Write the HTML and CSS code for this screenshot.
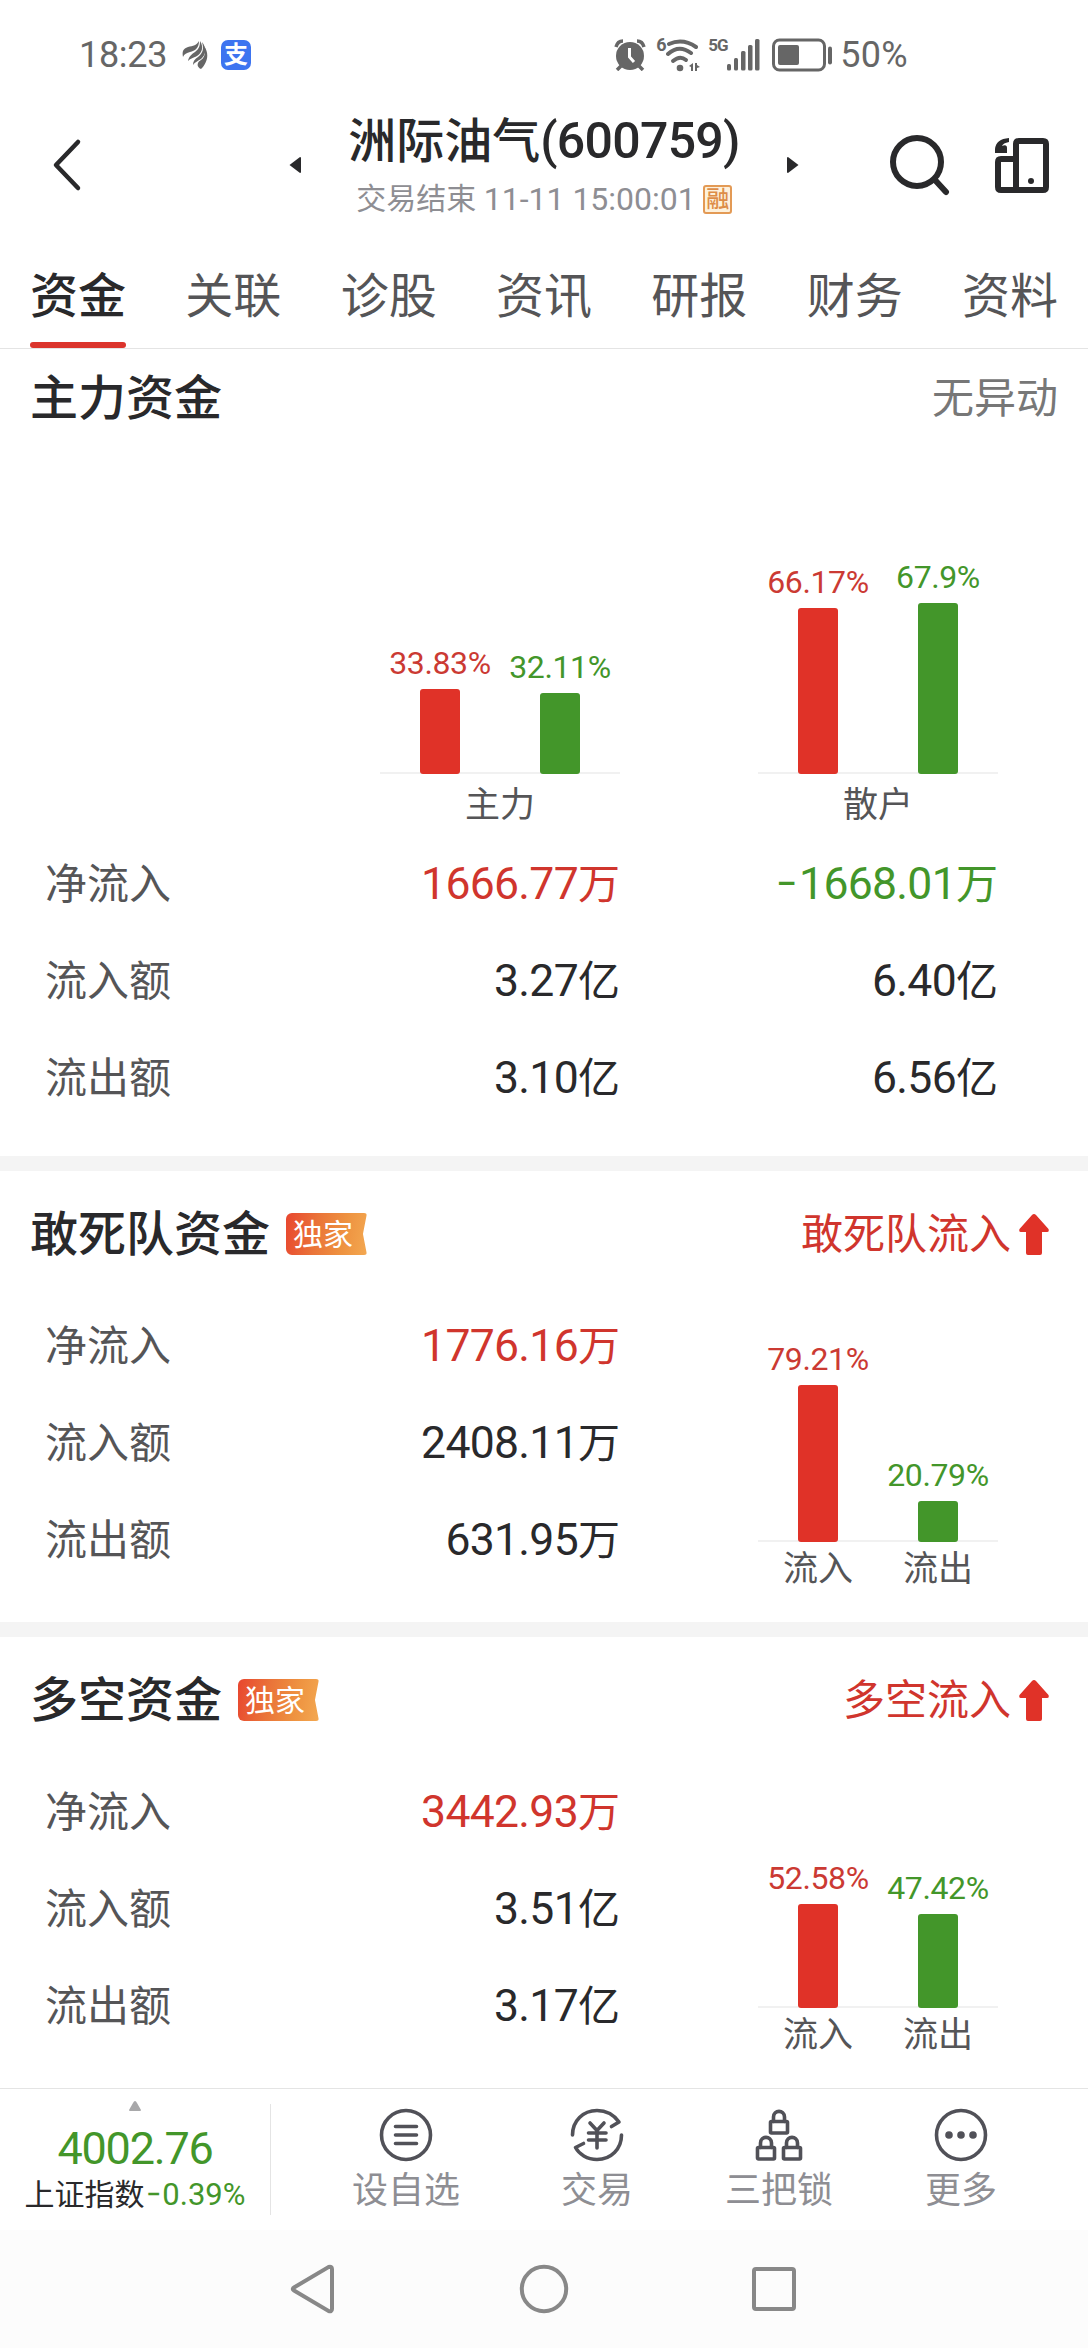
FILE: index.html
```html
<!DOCTYPE html>
<html lang="zh-CN">
<head>
    <meta charset="UTF-8">
    <meta name="viewport" content="width=device-width, initial-scale=1.0">
    <title>洲际油气(600759)</title>
    <link rel="stylesheet" href="styles.css">
</head>
<body>
    <div class="status-bar">
        <span class="clock">18:23</span>
        <svg class="icon-wing" width="26" height="30" viewBox="0 0 26 30">
            <path d="M1 17C0 11 1 9 6 7C11 6 15 5 17 1C17 8 13 11 8 12C5 13 2 14 1 17Z"/>
            <path d="M6 21C7 16 10 14 13 12C17 9 18 6 18 1C22 7 20 13 15 16C11 18 9 18 6 21Z"/>
            <path d="M11 25C11 21 13 19 16 17C21 13 22 9 20 2C25 8 24 15 19 19C16 21 13 22 11 25Z"/>
            <path d="M19 29C14 27 15 22 19 20C23 17 24 12 22 6C28 14 25 23 19 29Z"/>
        </svg>
        <span class="pay-icon">支</span>
        <div class="status-right">
            <svg class="icon-alarm" width="32" height="32" viewBox="0 0 32 32">
                <circle cx="16" cy="17" r="14"/>
                <path class="line" d="M2 8C3 4 5 2 9 2M30 8C29 4 27 2 23 2M7 27L3 31M25 27L29 31"/>
                <path class="hand" d="M15.500 9V18L20 23"/>
            </svg>
            <span class="tiny tiny-wifi">6</span>
            <svg class="icon-wifi" width="34" height="33" viewBox="0 0 34 33">
                <path class="arc" d="M3 5Q17 -1 30 8"/>
                <path class="arc" d="M2 15Q13 5 25 14"/>
                <path class="arc" d="M7 22Q14 16 20 21"/>
                <circle cx="14" cy="29" r="3.300"/>
                <path d="M23 27L27 24V32H25V28ZM29 24H31V26L34 28L31 29V32H29Z"/>
            </svg>
            <span class="tiny tiny-5g">5G</span>
            <svg class="icon-signal" width="34" height="32" viewBox="0 0 34 32">
                <rect x="0" y="25" width="4" height="6.500" rx="1.500"/>
                <rect x="7" y="19" width="4" height="12.500" rx="1.500"/>
                <rect x="14" y="12" width="4.500" height="19.500" rx="1.500"/>
                <rect x="21" y="6" width="4.500" height="25.500" rx="1.500"/>
                <rect x="28" y="0" width="4.500" height="31.500" rx="1.500"/>
            </svg>
            <svg class="icon-battery" width="62" height="34" viewBox="0 0 62 34">
                <rect class="shell" x="1.500" y="2" width="51" height="30" rx="6"/>
                <rect x="6" y="7" width="21" height="20" rx="2"/>
                <rect x="56" y="8.500" width="4" height="18" rx="2"/>
            </svg>
            <span class="battery-text">50%</span>
        </div>
    </div>

    <header class="header">
        <svg class="btn-back" width="30" height="54" viewBox="0 0 30 54">
            <path d="M26 4L4 27L26 50"/>
        </svg>
        <svg class="btn-prev" width="12" height="16" viewBox="0 0 12 16">
            <path d="M0.500 8L11 0Q12 0 12 1V15Q12 16 11 16Z"/>
        </svg>
        <div class="stock">
            <h1 class="stock-name">洲际油气<span class="stock-code">(600759)</span></h1>
            <div class="stock-sub">交易结束 <span class="stock-time">11-11 15:00:01</span><span class="tag-rong">融</span></div>
        </div>
        <svg class="btn-next" width="12" height="16" viewBox="0 0 12 16">
            <path d="M11.500 8L1 0Q0 0 0 1V15Q0 16 1 16Z"/>
        </svg>
        <svg class="btn-search" width="62" height="62" viewBox="0 0 62 62">
            <circle cx="28" cy="28" r="24"/>
            <path d="M46 46L57 58"/>
        </svg>
        <svg class="btn-theme" width="54" height="56" viewBox="0 0 54 56">
            <path class="outline" d="M21 52V7Q21 4 24 4H48Q51 4 51 7V50Q51 53 48 53H6Q3 53 3 50V25Q3 22 6 22H21"/>
            <path d="M0 16V12Q1 2 14 1V5Q8 6 7 9Q12 7 12 11V16Z"/>
            <circle cx="36" cy="44" r="3"/>
        </svg>
    </header>

    <nav class="tabs">
        <a class="tab active">资金</a>
        <a class="tab">关联</a>
        <a class="tab">诊股</a>
        <a class="tab">资讯</a>
        <a class="tab">研报</a>
        <a class="tab">财务</a>
        <a class="tab">资料</a>
    </nav>

    <section class="section section-main">
        <div class="section-head">
            <h2>主力资金</h2>
            <span class="muted">无异动</span>
        </div>
        <div class="chart-row">
            <div class="chart">
                <div class="bars">
                    <div class="bar-col red"><span>33.83%</span><i style="height: 85px"></i></div>
                    <div class="bar-col green"><span>32.11%</span><i style="height: 81px"></i></div>
                </div>
                <div class="chart-labels"><span>主力</span></div>
            </div>
            <div class="chart">
                <div class="bars">
                    <div class="bar-col red"><span>66.17%</span><i style="height: 166px"></i></div>
                    <div class="bar-col green"><span>67.9%</span><i style="height: 171px"></i></div>
                </div>
                <div class="chart-labels"><span>散户</span></div>
            </div>
        </div>
        <div class="row">
            <span class="name">净流入</span>
            <span class="value up">1666.77<small>万</small></span>
            <span class="value down"><b class="minus">−</b>1668.01<small>万</small></span>
        </div>
        <div class="row">
            <span class="name">流入额</span>
            <span class="value">3.27<small>亿</small></span>
            <span class="value">6.40<small>亿</small></span>
        </div>
        <div class="row">
            <span class="name">流出额</span>
            <span class="value">3.10<small>亿</small></span>
            <span class="value">6.56<small>亿</small></span>
        </div>
    </section>

    <section class="section section-side">
        <div class="section-head">
            <h2>敢死队资金</h2>
            <span class="badge">独家</span>
            <span class="trend">敢死队流入
                <svg width="30" height="41" viewBox="0 0 30 41"><path d="M15 0Q16 0 17 1L29.500 15Q30.500 18 28 18H23V39Q23 41 21 41H9Q7 41 7 39V18H2Q-0.500 18 0.500 15L13 1Q14 0 15 0Z"/></svg>
            </span>
        </div>
        <div class="section-body">
            <div class="rows">
                <div class="row"><span class="name">净流入</span><span class="value up">1776.16<small>万</small></span></div>
                <div class="row"><span class="name">流入额</span><span class="value">2408.11<small>万</small></span></div>
                <div class="row"><span class="name">流出额</span><span class="value">631.95<small>万</small></span></div>
            </div>
            <div class="chart">
                <div class="bars">
                    <div class="bar-col red"><span>79.21%</span><i style="height: 157px"></i></div>
                    <div class="bar-col green"><span>20.79%</span><i style="height: 41px"></i></div>
                </div>
                <div class="chart-labels"><span>流入</span><span>流出</span></div>
            </div>
        </div>
    </section>

    <section class="section section-side">
        <div class="section-head">
            <h2>多空资金</h2>
            <span class="badge">独家</span>
            <span class="trend">多空流入
                <svg width="30" height="41" viewBox="0 0 30 41"><path d="M15 0Q16 0 17 1L29.500 15Q30.500 18 28 18H23V39Q23 41 21 41H9Q7 41 7 39V18H2Q-0.500 18 0.500 15L13 1Q14 0 15 0Z"/></svg>
            </span>
        </div>
        <div class="section-body">
            <div class="rows">
                <div class="row"><span class="name">净流入</span><span class="value up">3442.93<small>万</small></span></div>
                <div class="row"><span class="name">流入额</span><span class="value">3.51<small>亿</small></span></div>
                <div class="row"><span class="name">流出额</span><span class="value">3.17<small>亿</small></span></div>
            </div>
            <div class="chart">
                <div class="bars">
                    <div class="bar-col red"><span>52.58%</span><i style="height: 104px"></i></div>
                    <div class="bar-col green"><span>47.42%</span><i style="height: 94px"></i></div>
                </div>
                <div class="chart-labels"><span>流入</span><span>流出</span></div>
            </div>
        </div>
    </section>

    <footer class="toolbar">
        <div class="index">
            <svg class="index-arrow" width="12" height="10" viewBox="0 0 12 10"><path d="M6 0Q7 0 8 2L12 9Q12 10 11 10H1Q0 10 0 9L4 2Q5 0 6 0Z"/></svg>
            <div class="index-value">4002.76</div>
            <div class="index-name">上证指数<span class="index-change"><b class="minus">−</b>0.39%</span></div>
        </div>
        <div class="actions">
            <a class="action">
                <svg width="54" height="54" viewBox="0 0 54 54">
                    <circle cx="27" cy="27" r="24.500"/>
                    <path class="thick" d="M16.500 18.500H37.500M16.500 27H37.500M16.500 35.500H37.500"/>
                </svg>
                <span>设自选</span>
            </a>
            <a class="action">
                <svg width="54" height="54" viewBox="0 0 54 54">
                    <path d="M2.500 27C2.500 13 13 2.500 27 2.500C37 2.500 44 7 49 14L41.500 18.500"/>
                    <path d="M51.500 27C51.500 41 41 51.500 27 51.500C17 51.500 9 46 5.500 39.500L13.500 35.500"/>
                    <path d="M20 15L27 22.500L34 15M27 23V40M18.500 25H36M18.500 32H36"/>
                </svg>
                <span>交易</span>
            </a>
            <a class="action">
                <svg width="54" height="54" viewBox="0 0 54 54">
                    <rect x="18.500" y="13.500" width="17" height="11.500" rx="1"/>
                    <path d="M21.500 13.500V9C21.500 1.500 32.500 1.500 32.500 9V13.500"/>
                    <rect x="5.500" y="39.500" width="17" height="11.500" rx="1"/>
                    <path d="M8.500 39.500V35C8.500 27.500 19.500 27.500 19.500 35V39.500"/>
                    <rect x="31.500" y="39.500" width="17" height="11.500" rx="1"/>
                    <path d="M34.500 39.500V35C34.500 27.500 45.500 27.500 45.500 35V39.500"/>
                </svg>
                <span>三把锁</span>
            </a>
            <a class="action">
                <svg width="54" height="54" viewBox="0 0 54 54">
                    <circle cx="27" cy="27" r="24.500"/>
                    <circle class="dot" cx="15" cy="27" r="3.800"/>
                    <circle class="dot" cx="27" cy="27" r="3.800"/>
                    <circle class="dot" cx="39" cy="27" r="3.800"/>
                </svg>
                <span>更多</span>
            </a>
        </div>
    </footer>

    <div class="system-nav">
        <svg width="50" height="50" viewBox="0 0 50 50"><path d="M5 23.500L39.500 3Q43 2 43 5V45Q43 48 39.500 47L5 26.500Q2.500 25 5 23.500Z"/></svg>
        <svg width="50" height="50" viewBox="0 0 50 50"><circle cx="25" cy="25" r="22.200"/></svg>
        <svg width="50" height="50" viewBox="0 0 50 50"><rect x="5" y="5" width="40" height="40" rx="2"/></svg>
    </div>
</body>
</html>
```
FILE: styles.css
```css
* {
    box-sizing: border-box;
}

body {
    margin: 0;
    width: 1088px;
    background-color: #fff;
    color: #29292b;
    font-family: Roboto, "Noto Sans CJK SC", sans-serif;
}

h1, h2 {
    margin: 0;
    font-weight: 500;
}

svg {
    display: block;
    flex-shrink: 0;
}

/* status bar */
.status-bar {
    display: flex;
    align-items: center;
    height: 110px;
    padding: 0 180px 0 79px;
    color: #666;
    fill: #666;
    font-size: 36px;
    line-height: 40px;
}

.clock {
    width: 103px;
    letter-spacing: -0.3px;
}

.pay-icon {
    width: 30px;
    height: 30px;
    margin-left: 13px;
    border-radius: 7px;
    background-color: #3d74f0;
    color: #fff;
    font-size: 24px;
    font-weight: 700;
    line-height: 30px;
    text-align: center;
}

.status-right {
    display: flex;
    align-items: center;
    margin-left: auto;
}

.icon-alarm .line {
    fill: none;
    stroke: #666;
    stroke-width: 3.5;
}

.icon-alarm .hand {
    fill: none;
    stroke: #fff;
    stroke-width: 3;
}

.tiny {
    align-self: flex-start;
    font-size: 18px;
    font-weight: 700;
    line-height: 20px;
}

.tiny-wifi {
    width: 10px;
    margin-left: 10px;
}

.icon-wifi .arc {
    fill: none;
    stroke: #666;
    stroke-width: 4;
    stroke-linecap: round;
}

.tiny-5g {
    width: 19px;
    margin-left: 8px;
    font-size: 17px;
    letter-spacing: -1px;
}

.icon-battery {
    margin-left: 11px;
}

.icon-battery .shell {
    fill: none;
    stroke: #666;
    stroke-width: 3;
}

.battery-text {
    margin-left: 6px;
    letter-spacing: 0.3px;
}

/* header */
.header {
    display: flex;
    align-items: center;
    height: 110px;
    padding-left: 52px;
    fill: #29292b;
}

.btn-back {
    fill: none;
    stroke: #29292b;
    stroke-width: 4.5;
    stroke-linecap: round;
    stroke-linejoin: round;
}

.btn-prev {
    margin-left: 207px;
}

.stock {
    width: 486px;
    margin-top: 7px;
    text-align: center;
}

.stock-name {
    font-size: 48px;
    line-height: 60px;
    white-space: nowrap;
}

.stock-code {
    font-size: 50px;
    letter-spacing: -0.7px;
}

.stock-sub {
    display: flex;
    align-items: center;
    justify-content: center;
    color: #8e8e93;
    font-size: 30px;
    line-height: 54px;
    white-space: pre;
}

.stock-time {
    font-size: 32px;
}

.tag-rong {
    width: 29px;
    height: 29px;
    margin-left: 7px;
    border: 2px solid #e39a55;
    border-radius: 3px;
    background-color: #fdf1dc;
    color: #dd8d48;
    font-size: 23px;
    font-weight: 500;
    line-height: 26px;
    text-indent: 1px;
}

.btn-search {
    margin-left: 90px;
    fill: none;
    stroke: #29292b;
    stroke-width: 6;
    stroke-linecap: round;
}

.btn-theme {
    margin-left: 44px;
}

.btn-theme .outline {
    fill: none;
    stroke: #29292b;
    stroke-width: 6;
}

/* tabs */
.tabs {
    display: flex;
    justify-content: space-between;
    height: 129px;
    padding: 0 30px;
    border-bottom: 1px solid #e4e4e4;
}

.tab {
    height: 128px;
    padding-top: 47px;
    color: #555557;
    font-size: 48px;
    line-height: 60px;
}

.tab.active {
    color: #29292b;
    font-weight: 500;
}

.tab.active::after {
    content: "";
    display: block;
    height: 6px;
    margin-top: 15px;
    border-radius: 3px;
    background-color: #db342c;
}

/* sections */
.section {
    border-bottom: 15px solid #f4f4f4;
}

.section-main {
    height: 822px;
}

.section-side {
    height: 466px;
}

.section-side:last-of-type {
    height: 451px;
    border-bottom: none;
}

.section-head {
    display: flex;
    align-items: center;
    height: 126px;
    padding: 0 30px;
}

.section-main .section-head {
    height: 99px;
}

.section-head h2 {
    font-size: 48px;
    line-height: 60px;
}

.muted {
    margin-left: auto;
    color: #777;
    font-size: 42px;
    line-height: 60px;
}

.badge {
    width: 81px;
    height: 42px;
    margin-left: 16px;
    padding-left: 7px;
    border-radius: 6px 3px 3px 6px;
    background: linear-gradient(100deg, #e8462f 0%, #ea7439 38%, #ee9240 70%, #f3a851 100%);
    clip-path: polygon(0 0, 100% 0, 95% 50%, 100% 100%, 0 100%);
    color: #fff;
    font-size: 30px;
    line-height: 44px;
}

.trend {
    display: flex;
    align-items: center;
    gap: 8px;
    margin-left: auto;
    padding-right: 9px;
    color: #d0352d;
    fill: #e03228;
    font-size: 42px;
    line-height: 60px;
}

.section-side h2,
.section-side .trend {
    padding-top: 1px;
}

.section-body {
    display: flex;
    justify-content: space-between;
    padding-right: 90px;
}

.rows {
    width: 620px;
    padding-top: 1px;
}

.row {
    display: grid;
    grid-template-columns: 335px 240px 378px;
    padding-left: 45px;
    height: 97px;
    font-size: 42px;
    line-height: 97px;
}

.rows .row {
    grid-template-columns: 335px 240px;
}

.name {
    color: #555557;
}

.value {
    font-size: 44.5px;
    letter-spacing: -0.7px;
    text-align: right;
    white-space: nowrap;
}

.value small {
    font-size: 42px;
    letter-spacing: 0;
}

.minus {
    display: inline-block;
    font-weight: 400;
    transform: scaleX(0.85);
}

.up {
    color: #d0352d;
}

.down {
    color: #43962a;
}

/* bar charts */
.chart-row {
    display: flex;
    justify-content: flex-end;
    gap: 138px;
    height: 388px;
    padding-right: 90px;
}

.chart {
    width: 240px;
}

.bars {
    display: flex;
    height: 245px;
    background: linear-gradient(#f1f1f1, #f1f1f1) bottom / 100% 2px no-repeat;
}

.chart-row .bars {
    height: 326px;
}

.bar-col {
    display: flex;
    flex-direction: column;
    align-items: center;
    justify-content: flex-end;
    width: 120px;
}

.bar-col span {
    margin-bottom: 10px;
    font-size: 32px;
    letter-spacing: -0.4px;
    line-height: 32px;
}

.bar-col i {
    width: 40px;
    border-radius: 3px;
}

.red span {
    color: #cb3a33;
}

.red i {
    background-color: #e03228;
}

.green span {
    color: #43962a;
}

.green i {
    background-color: #43962a;
}

.chart-labels {
    display: flex;
    justify-content: space-around;
    color: #555557;
    font-size: 35px;
    line-height: 55px;
}

.chart-row .chart-labels {
    line-height: 64px;
}

/* bottom toolbar */
.toolbar {
    display: flex;
    height: 142px;
    border-top: 1px solid #e4e4e4;
}

.index {
    display: flex;
    flex-direction: column;
    align-items: center;
    width: 271px;
    height: 111px;
    margin-top: 15px;
    border-right: 1px solid #e4e4e4;
}

.index-arrow {
    margin-top: -3px;
    fill: #a8a8aa;
}

.index-value {
    margin-top: 11px;
    color: #43962a;
    font-size: 45px;
    letter-spacing: -1.2px;
    line-height: 54px;
}

.index-name {
    font-size: 30px;
    line-height: 37px;
    white-space: nowrap;
}

.index-change {
    color: #43962a;
    font-size: 31px;
}

.actions {
    display: flex;
    gap: 92px;
    padding: 19px 0 0 81px;
}

.action {
    display: flex;
    flex-direction: column;
    align-items: center;
    color: #8e8e93;
    font-size: 36px;
    line-height: 59px;
}

.action:first-child {
    margin-right: 9px;
}

.action svg {
    fill: none;
    stroke: #515158;
    stroke-width: 3.6;
    stroke-linecap: round;
    stroke-linejoin: round;
}

.action .dot {
    fill: #515158;
    stroke: none;
}

/* system navigation */
.system-nav {
    display: flex;
    justify-content: center;
    gap: 180px;
    height: 118px;
    padding-top: 34px;
    background-color: #fcfcfc;
    fill: none;
    stroke: #888;
    stroke-width: 4;
}
```
